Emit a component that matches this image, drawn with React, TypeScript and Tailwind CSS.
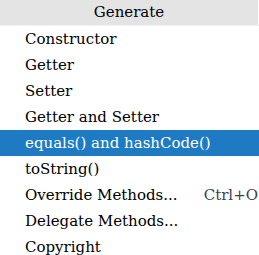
import React from "react";

const items: { label: string; shortcut?: string; active?: boolean }[] = [
  { label: "Constructor" },
  { label: "Getter" },
  { label: "Setter" },
  { label: "Getter and Setter" },
  { label: "equals() and hashCode()", active: true },
  { label: "toString()" },
  { label: "Override Methods...", shortcut: "Ctrl+O" },
  { label: "Delegate Methods..." },
  { label: "Copyright" },
];

export default function App() {
  return (
    <div className="w-[259px] h-[255px] overflow-hidden bg-white text-[15px] text-black font-['DejaVu_Serif','DejaVu_Sans',serif]">
      <div className="w-[258px] h-[25px] bg-[#e4e4e4] flex items-center justify-center leading-none">
        Generate
      </div>
      <div className="h-px bg-[#f2f2f2]" />
      {items.map((it) => (
        <div
          key={it.label}
          className={
            it.active
              ? "h-[26px] flex items-center pl-[25px] pr-px bg-[#1e7bc3] text-white"
              : "h-[26px] flex items-center pl-[25px] pr-px"
          }
        >
          <span className="flex-1 whitespace-nowrap">{it.label}</span>
          {it.shortcut && <span className="text-[#3c4150]">{it.shortcut}</span>}
        </div>
      ))}
    </div>
  );
}
